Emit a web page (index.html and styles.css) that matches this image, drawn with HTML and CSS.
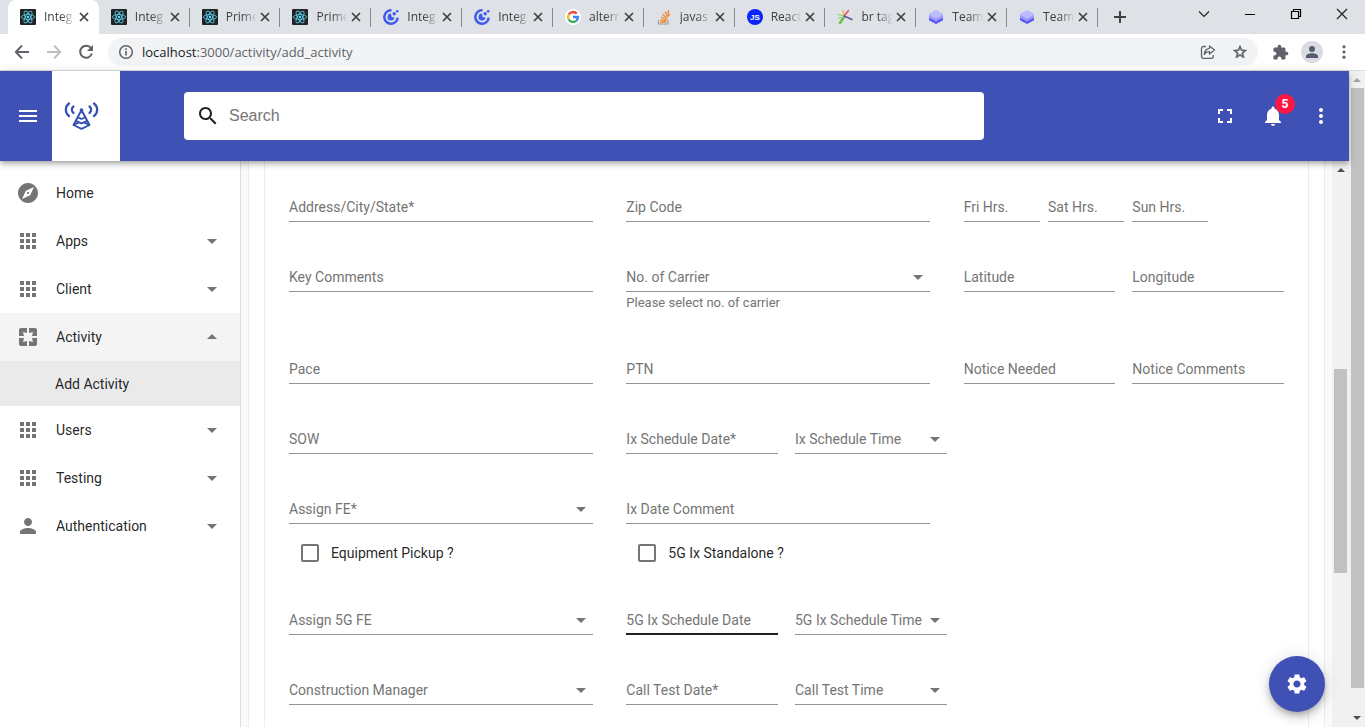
FILE: index.html
```html
<!DOCTYPE html>
<html lang="en">
<head>
<meta charset="utf-8">
<title>Add Activity</title>
<link rel="stylesheet" href="styles.css">
</head>
<body>
<svg class="sprite" aria-hidden="true">
  <symbol id="react" viewBox="0 0 16 16"><rect width="16" height="16" rx="1" fill="#222"/><g fill="none" stroke="#53c1de" stroke-width=".9"><ellipse cx="8" cy="8" rx="6.6" ry="2.5"/><ellipse cx="8" cy="8" rx="6.6" ry="2.5" transform="rotate(60 8 8)"/><ellipse cx="8" cy="8" rx="6.6" ry="2.5" transform="rotate(120 8 8)"/></g><circle cx="8" cy="8" r="1.3" fill="#61dafb"/></symbol>
  <symbol id="clock" viewBox="0 0 16 16"><path d="M8.5 1.3A6.7 6.7 0 1 0 14.7 8.6" fill="none" stroke="#3d5af1" stroke-width="2.5"/><path d="M8 4.6A3.5 3.5 0 1 0 11.5 8.600L8.600 8z" fill="#3d5af1"/><circle cx="11.200" cy="4.700" r="1.700" fill="#3d5af1"/><circle cx="14.200" cy="2.300" r="1.300" fill="#3d5af1"/></symbol>
  <symbol id="google" viewBox="0 0 16 16"><circle cx="8" cy="8" r="8" fill="#fff"/><g fill="none" stroke-width="2.300"><path d="M11.700 4.600A5 5 0 0 0 3.700 5.500" stroke="#ea4335"/><path d="M3.700 5.500A5 5 0 0 0 3.700 10.500" stroke="#fbbc05"/><path d="M3.700 10.500A5 5 0 0 0 11.200 11.800" stroke="#34a853"/><path d="M11.200 11.800A5 5 0 0 0 13 8H8" stroke="#4285f4"/></g></symbol>
  <symbol id="stack" viewBox="0 0 16 16"><path d="M2.500 11v4h9.500v-4" fill="none" stroke="#9a9b9e" stroke-width="1.200"/><g stroke="#f48024" stroke-width="1.300"><path d="M4.200 13h6M4.300 10.600l6 1M5 8l5.800 2.500M6.500 5.200l5 4M9 2.800l3.400 5M12 1l1 6"/></g></symbol>
  <symbol id="js" viewBox="0 0 16 16"><circle cx="8" cy="8" r="8" fill="#0b24fb"/><text x="8" y="10.800" text-anchor="middle" class="js-mark">JS</text></symbol>
  <symbol id="burst" viewBox="0 0 16 16"><g fill="none" stroke-linecap="round"><path d="M7 8L3 14" stroke="#6cc04a" stroke-width="2.500"/><path d="M7 7L.8 5.500M8 8L1.500 9" stroke="#8fd06a" stroke-width="1"/><path d="M7 6.500L6 1.500" stroke="#f5b642" stroke-width="1.300"/><path d="M7.500 6.500l4-5" stroke="#ef4d5e" stroke-width="1.500"/><path d="M7 7l8 3.500" stroke="#6a4f9c" stroke-width="1.500"/></g></symbol>
  <symbol id="layers" viewBox="0 0 16 16"><path d="M1 8.300v3L8 15l7-3.700v-3z" fill="#5a55f5"/><path d="M1 5.800v3L8 12.500l7-3.700v-3z" fill="#9b99ff"/><path d="M8 1l7 3.800v1L8 9.700 1 5.800v-1z" fill="#bdbcff"/></symbol>
  <symbol id="x" viewBox="0 0 12 12"><path d="M2 2l8 8M10 2l-8 8" stroke="#3c4043" stroke-width="1.700"/></symbol>
  <symbol id="down" viewBox="0 0 24 24"><path d="M7 10l5 5 5-5z" fill="currentColor"/></symbol>
  <symbol id="up" viewBox="0 0 24 24"><path d="M7 14l5-5 5 5z" fill="currentColor"/></symbol>
  <symbol id="apps" viewBox="0 0 24 24"><path fill="currentColor" d="M4 8h4V4H4v4zm6 12h4v-4h-4v4zm-6 0h4v-4H4v4zm0-6h4v-4H4v4zm6 0h4v-4h-4v4zm6-10v4h4V4h-4zm-6 4h4V4h-4v4zm6 6h4v-4h-4v4zm0 6h4v-4h-4v4z"/></symbol>
  <symbol id="person" viewBox="0 0 24 24"><path fill="currentColor" d="M12 12c2.210 0 4-1.790 4-4s-1.790-4-4-4-4 1.790-4 4 1.790 4 4 4zm0 2c-2.670 0-8 1.340-8 4v2h16v-2c0-2.660-5.330-4-8-4z"/></symbol>
  <symbol id="more" viewBox="0 0 24 24"><path fill="currentColor" d="M12 8c1.100 0 2-.9 2-2s-.9-2-2-2-2 .9-2 2 .9 2 2 2zm0 2c-1.100 0-2 .9-2 2s.9 2 2 2 2-.9 2-2-.9-2-2-2zm0 6c-1.100 0-2 .9-2 2s.9 2 2 2 2-.9 2-2-.9-2-2-2z"/></symbol>
</svg>

<div class="browser">
  <div class="tabstrip">
    <div class="tabs">
      <div class="tab tab--active"><svg class="favicon"><use href="#react"/></svg><span class="tab-title">Integ</span><button class="tab-close" aria-label="Close tab"><svg><use href="#x"/></svg></button></div>
      <div class="tab"><svg class="favicon"><use href="#react"/></svg><span class="tab-title">Integ</span><button class="tab-close" aria-label="Close tab"><svg><use href="#x"/></svg></button></div>
      <div class="tab"><svg class="favicon"><use href="#react"/></svg><span class="tab-title">Prime</span><button class="tab-close" aria-label="Close tab"><svg><use href="#x"/></svg></button></div>
      <div class="tab"><svg class="favicon"><use href="#react"/></svg><span class="tab-title">Prime</span><button class="tab-close" aria-label="Close tab"><svg><use href="#x"/></svg></button></div>
      <div class="tab"><svg class="favicon"><use href="#clock"/></svg><span class="tab-title">Integ</span><button class="tab-close" aria-label="Close tab"><svg><use href="#x"/></svg></button></div>
      <div class="tab"><svg class="favicon"><use href="#clock"/></svg><span class="tab-title">Integ</span><button class="tab-close" aria-label="Close tab"><svg><use href="#x"/></svg></button></div>
      <div class="tab"><svg class="favicon"><use href="#google"/></svg><span class="tab-title">altern</span><button class="tab-close" aria-label="Close tab"><svg><use href="#x"/></svg></button></div>
      <div class="tab"><svg class="favicon"><use href="#stack"/></svg><span class="tab-title">javas</span><button class="tab-close" aria-label="Close tab"><svg><use href="#x"/></svg></button></div>
      <div class="tab"><svg class="favicon"><use href="#js"/></svg><span class="tab-title">React</span><button class="tab-close" aria-label="Close tab"><svg><use href="#x"/></svg></button></div>
      <div class="tab"><svg class="favicon"><use href="#burst"/></svg><span class="tab-title">br tag</span><button class="tab-close" aria-label="Close tab"><svg><use href="#x"/></svg></button></div>
      <div class="tab"><svg class="favicon"><use href="#layers"/></svg><span class="tab-title">Team</span><button class="tab-close" aria-label="Close tab"><svg><use href="#x"/></svg></button></div>
      <div class="tab"><svg class="favicon"><use href="#layers"/></svg><span class="tab-title">Team</span><button class="tab-close" aria-label="Close tab"><svg><use href="#x"/></svg></button></div>
    </div>
    <button class="new-tab" aria-label="New tab"><svg width="14" height="14" viewBox="0 0 14 14"><path d="M7 1v12M1 7h12" stroke="#3c4043" stroke-width="2"/></svg></button>
    <div class="window-controls">
      <button aria-label="Search tabs"><svg width="12" height="12" viewBox="0 0 12 12"><path d="M1 3.500l5 5 5-5" fill="none" stroke="#222" stroke-width="1.200"/></svg></button>
      <button aria-label="Minimize"><svg width="12" height="12" viewBox="0 0 12 12"><path d="M1 6.500h10" stroke="#000"/></svg></button>
      <button aria-label="Restore"><svg width="12" height="12" viewBox="0 0 12 12"><path d="M1.500 3.500h7v7h-7zM3.500 3V1.500h7v7H9" fill="none" stroke="#000" stroke-width="1.200"/></svg></button>
      <button aria-label="Close window"><svg width="12" height="12" viewBox="0 0 12 12"><path d="M1 1l10 10M11 1L1 11" stroke="#222" stroke-width="1.200"/></svg></button>
    </div>
  </div>
  <div class="toolbar">
    <button class="tool" aria-label="Back"><svg width="16" height="16" viewBox="0 0 16 16"><path d="M15 8H2M8 1.500L1.800 8 8 14.500" fill="none" stroke="#5f6368" stroke-width="1.900"/></svg></button>
    <button class="tool" aria-label="Forward"><svg width="16" height="16" viewBox="0 0 16 16"><path d="M1 8h13M8 1.500L14.200 8 8 14.500" fill="none" stroke="#bcbec0" stroke-width="1.900"/></svg></button>
    <button class="tool" aria-label="Reload"><svg width="16" height="16" viewBox="0 0 16 16"><path d="M13 4.200A6 6 0 1 0 13.900 9.500" fill="none" stroke="#5f6368" stroke-width="2"/><path d="M15 1v6H9z" fill="#5f6368"/></svg></button>
    <div class="omnibox">
      <svg width="16" height="16" viewBox="0 0 16 16"><circle cx="8" cy="8" r="6.300" fill="none" stroke="#5f6368" stroke-width="1.500"/><path d="M7.200 7h1.600v4.500H7.200zM7.200 4.300h1.600v1.600H7.200z" fill="#5f6368"/></svg>
      <span class="url"><span class="host">localhost</span>:3000/activity/add_activity</span>
      <button class="tool" aria-label="Share"><svg width="16" height="16" viewBox="0 0 16 16"><path d="M6 2.500H3.500a2 2 0 0 0-2 2v7.800a2 2 0 0 0 2 2h7.800a2 2 0 0 0 2-2V11" fill="none" stroke="#5f6368" stroke-width="1.300"/><path d="M9.500 2l5 4-5 4V7.700C7 7.700 5.500 8.500 4.300 10.500 4.500 7.200 6.200 4.700 9.500 4.300z" fill="none" stroke="#5f6368" stroke-width="1.300" stroke-linejoin="round"/></svg></button>
      <button class="tool" aria-label="Bookmark"><svg width="16" height="16" viewBox="0 0 24 24"><path fill="#5f6368" d="M22 9.240l-7.190-.62L12 2 9.190 8.630 2 9.240l5.460 4.730L5.820 21 12 17.270 18.180 21l-1.630-7.030L22 9.240zM12 15.400l-3.760 2.270 1-4.280-3.320-2.880 4.380-.38L12 6.100l1.710 4.040 4.380.38-3.320 2.880 1 4.280L12 15.400z" stroke="#5f6368"/></svg></button>
    </div>
    <button class="tool" aria-label="Extensions"><svg width="17" height="17" viewBox="0 0 24 24"><path fill="#5f6368" d="M20.500 11H19V7c0-1.100-.9-2-2-2h-4V3.500C13 2.120 11.880 1 10.500 1S8 2.120 8 3.500V5H4c-1.100 0-1.990.9-1.990 2v3.800H3.500c1.490 0 2.700 1.210 2.700 2.700s-1.210 2.700-2.700 2.700H2V20c0 1.100.9 2 2 2h3.800v-1.500c0-1.490 1.210-2.700 2.700-2.700 1.490 0 2.700 1.210 2.700 2.700V22H17c1.100 0 2-.9 2-2v-4h1.500c1.380 0 2.500-1.120 2.500-2.500S21.880 11 20.500 11z"/></svg></button>
    <button class="tool" aria-label="Profile"><svg class="avatar" width="22" height="22" viewBox="0 0 22 22"><circle cx="11" cy="11" r="11" fill="#dadce0"/><circle cx="11" cy="8" r="3" fill="#525e70"/><path d="M5 17v-1.500c0-2 3-3.200 6-3.200s6 1.200 6 3.200V17z" fill="#525e70"/></svg></button>
    <button class="tool" aria-label="Menu"><svg width="16" height="16" viewBox="0 0 16 16" fill="#5f6368"><circle cx="8" cy="2.800" r="1.600"/><circle cx="8" cy="8" r="1.600"/><circle cx="8" cy="13.200" r="1.600"/></svg></button>
  </div>
</div>

<div class="viewport">
  <div class="app">
    <header class="appbar">
      <button class="icon-btn menu-btn" aria-label="Toggle menu"><svg width="24" height="24" viewBox="0 0 24 24"><path fill="currentColor" d="M3 18h18v-2H3v2zm0-5h18v-2H3v2zm0-7v2h18V6H3z"/></svg></button>
      <a class="logo" href="#" aria-label="Home"><svg width="36" height="30" viewBox="0 0 36 30" fill="none" stroke="#3151b5" stroke-linecap="round" stroke-linejoin="round"><path d="M5 2.500C.8 5.500.8 12 5 15M30 2.500C34.200 5.500 34.200 12 30 15" stroke-width="2.200"/><path d="M9.500 5.500C7.300 7 7.300 10.500 9.500 12M25.500 5.500C27.700 7 27.700 10.500 25.500 12" stroke-width="2.200"/><circle cx="17.500" cy="9" r="1.800" fill="#3151b5" stroke="none"/><path d="M17 10L9.500 24l8 3.800 8-3.800L18 10M14.300 16.500l3.200 1.500 3.200-1.500M12.300 20l5.200 2.400 5.200-2.400M9.500 24l5-2.400M25.500 24l-5-2.400" stroke-width="1.900"/></svg></a>
      <form class="search" role="search">
        <label for="search"><svg width="24" height="24" viewBox="0 0 24 24" role="img" aria-label="Search"><path fill="#212121" d="M15.500 14h-.79l-.28-.27C15.410 12.590 16 11.110 16 9.500 16 5.910 13.090 3 9.500 3S3 5.910 3 9.500 5.910 16 9.500 16c1.610 0 3.090-.59 4.230-1.570l.27.28v.79l5 4.990L20.490 19l-4.990-5zm-6 0C7.010 14 5 11.990 5 9.500S7.010 5 9.500 5 14 7.010 14 9.500 11.990 14 9.500 14z"/></svg></label>
        <input id="search" type="search" placeholder="Search">
      </form>
      <div class="actions">
        <button class="icon-btn" aria-label="Full screen"><svg width="24" height="24" viewBox="0 0 24 24"><path fill="currentColor" d="M7 14H5v5h5v-2H7v-3zm-2-4h2V7h3V5H5v5zm12 7h-3v2h5v-5h-2v3zM14 5v2h3v3h2V5h-5z"/></svg></button>
        <button class="icon-btn" aria-label="Notifications"><svg width="24" height="24" viewBox="0 0 24 24"><path fill="currentColor" d="M12 22c1.100 0 2-.9 2-2h-4c0 1.100.89 2 2 2zm6-6v-5c0-3.070-1.640-5.640-4.500-6.320V4c0-.83-.67-1.500-1.500-1.500s-1.500.67-1.500 1.500v.68C7.630 5.360 6 7.920 6 11v5l-2 2v1h16v-1l-2-2z"/></svg><span class="badge">5</span></button>
        <button class="icon-btn" aria-label="More"><svg width="24" height="24"><use href="#more"/></svg></button>
      </div>
    </header>

    <div class="body">
      <nav class="sidebar">
        <a class="nav-item" href="#"><svg viewBox="0 0 24 24"><path fill="currentColor" d="M12 10.900c-.61 0-1.100.49-1.100 1.100s.49 1.100 1.100 1.100c.61 0 1.100-.49 1.100-1.100s-.49-1.100-1.100-1.100zM12 2C6.480 2 2 6.480 2 12s4.480 10 10 10 10-4.480 10-10S17.520 2 12 2zm2.190 12.190L6 18l3.810-8.190L18 6l-3.810 8.190z"/></svg><span>Home</span></a>
        <a class="nav-item" href="#"><svg><use href="#apps"/></svg><span>Apps</span><svg><use href="#down"/></svg></a>
        <a class="nav-item" href="#"><svg><use href="#apps"/></svg><span>Client</span><svg><use href="#down"/></svg></a>
        <a class="nav-item nav-item--open" href="#"><svg viewBox="0 0 24 24"><path fill="currentColor" d="M3 5v6h5L7 7l4 1V3H5c-1.100 0-2 .9-2 2zm5 8H3v6c0 1.100.9 2 2 2h6v-5l-4 1 1-4zm9 4l-4-1v5h6c1.100 0 2-.9 2-2v-6h-5l1 4zm2-14h-6v5l4-1-1 4h5V5c0-1.100-.9-2-2-2z"/></svg><span>Activity</span><svg><use href="#up"/></svg></a>
        <a class="nav-sub" href="#">Add Activity</a>
        <a class="nav-item" href="#"><svg><use href="#apps"/></svg><span>Users</span><svg><use href="#down"/></svg></a>
        <a class="nav-item" href="#"><svg><use href="#apps"/></svg><span>Testing</span><svg><use href="#down"/></svg></a>
        <a class="nav-item" href="#"><svg><use href="#person"/></svg><span>Authentication</span><svg><use href="#down"/></svg></a>
      </nav>

      <main class="main">
        <div class="card">
          <form class="panel">
            <div class="row">
              <div class="cell span-4"><div class="field"><label for="address">Address/City/State*</label><input id="address"></div></div>
              <div class="cell span-4"><div class="field"><label for="zip">Zip Code</label><input id="zip"></div></div>
              <div class="cell"><div class="field"><label for="fri">Fri Hrs.</label><input id="fri"></div></div>
              <div class="cell"><div class="field"><label for="sat">Sat Hrs.</label><input id="sat"></div></div>
              <div class="cell"><div class="field"><label for="sun">Sun Hrs.</label><input id="sun"></div></div>
            </div>
            <div class="row">
              <div class="cell span-4"><div class="field"><label for="comments">Key Comments</label><input id="comments"></div></div>
              <div class="cell span-4"><div class="field"><label for="carrier">No. of Carrier</label><select id="carrier"><option></option></select><svg><use href="#down"/></svg></div><p class="helper">Please select no. of carrier</p></div>
              <div class="cell span-2"><div class="field"><label for="lat">Latitude</label><input id="lat"></div></div>
              <div class="cell span-2"><div class="field"><label for="lng">Longitude</label><input id="lng"></div></div>
            </div>
            <div class="row">
              <div class="cell span-4"><div class="field"><label for="pace">Pace</label><input id="pace"></div></div>
              <div class="cell span-4"><div class="field"><label for="ptn">PTN</label><input id="ptn"></div></div>
              <div class="cell span-2"><div class="field"><label for="notice">Notice Needed</label><input id="notice"></div></div>
              <div class="cell span-2"><div class="field"><label for="notice-comments">Notice Comments</label><input id="notice-comments"></div></div>
            </div>
            <div class="row">
              <div class="cell span-4"><div class="field"><label for="sow">SOW</label><input id="sow"></div></div>
              <div class="cell span-2"><div class="field"><label for="ix-date">Ix Schedule Date*</label><input id="ix-date"></div></div>
              <div class="cell span-2"><div class="field"><label for="ix-time">Ix Schedule Time</label><select id="ix-time"><option></option></select><svg><use href="#down"/></svg></div></div>
            </div>
            <div class="row">
              <div class="cell span-4"><div class="field"><label for="fe">Assign FE*</label><select id="fe"><option></option></select><svg><use href="#down"/></svg></div><label class="check"><input type="checkbox">Equipment Pickup ?</label></div>
              <div class="cell span-4"><div class="field"><label for="ix-comment">Ix Date Comment</label><input id="ix-comment"></div><label class="check"><input type="checkbox">5G Ix Standalone ?</label></div>
            </div>
            <div class="row">
              <div class="cell span-4"><div class="field"><label for="fe5">Assign 5G FE</label><select id="fe5"><option></option></select><svg><use href="#down"/></svg></div></div>
              <div class="cell span-2"><div class="field field--active"><label for="ix5-date">5G Ix Schedule Date</label><input id="ix5-date"></div></div>
              <div class="cell span-2"><div class="field"><label for="ix5-time">5G Ix Schedule Time</label><select id="ix5-time"><option></option></select><svg><use href="#down"/></svg></div></div>
            </div>
            <div class="row">
              <div class="cell span-4"><div class="field"><label for="manager">Construction Manager</label><select id="manager"><option></option></select><svg><use href="#down"/></svg></div></div>
              <div class="cell span-2"><div class="field"><label for="call-date">Call Test Date*</label><input id="call-date"></div></div>
              <div class="cell span-2"><div class="field"><label for="call-time">Call Test Time</label><select id="call-time"><option></option></select><svg><use href="#down"/></svg></div></div>
            </div>
          </form>
        </div>
      </main>
      <div class="scrollbar scrollbar--inner" aria-hidden="true"><i class="arrow-up"></i><i class="thumb"></i></div>
    </div>
  </div>
  <div class="scrollbar scrollbar--outer" aria-hidden="true"><i class="arrow-up"></i><i class="thumb"></i><i class="arrow-down"></i></div>
  <button class="fab" aria-label="Settings"><svg width="24" height="24" viewBox="0 0 24 24"><path fill="currentColor" d="M19.140 12.940c.04-.3.060-.61.060-.94 0-.32-.02-.64-.07-.94l2.030-1.580c.18-.14.230-.41.120-.61l-1.920-3.320c-.12-.22-.37-.29-.59-.22l-2.390.96c-.5-.38-1.030-.7-1.620-.94l-.36-2.540c-.04-.24-.24-.41-.48-.41h-3.840c-.24 0-.43.17-.47.41l-.36 2.540c-.59.24-1.130.57-1.620.94l-2.390-.96c-.22-.08-.47 0-.59.22L2.740 8.870c-.12.21-.08.47.12.61l2.030 1.580c-.05.3-.09.63-.09.94s.02.64.07.94l-2.030 1.580c-.18.14-.23.41-.12.61l1.920 3.320c.12.22.37.29.59.22l2.390-.96c.5.38 1.030.7 1.620.94l.36 2.540c.05.24.24.41.48.41h3.840c.24 0 .44-.17.47-.41l.36-2.540c.59-.24 1.130-.56 1.620-.94l2.390.96c.22.08.47 0 .59-.22l1.920-3.320c.12-.22.070-.47-.12-.61l-2.010-1.580zM12 15.600c-1.980 0-3.600-1.620-3.600-3.600s1.620-3.600 3.600-3.600 3.600 1.620 3.600 3.600-1.620 3.600-3.600 3.600z"/></svg></button>
</div>
</body>
</html>
```

FILE: styles.css
```css
* { box-sizing: border-box; }
body {
  margin: 0;
  height: 100vh;
  display: flex;
  flex-direction: column;
  overflow: hidden;
  background: #fafafa;
  color: rgba(0, 0, 0, 0.87);
  font: 14px/20px Roboto, sans-serif;
}
button { padding: 0; border: 0; background: none; color: inherit; font: inherit; }
a { color: inherit; text-decoration: none; }
svg { display: block; flex: none; }
.sprite { position: absolute; width: 0; height: 0; }
.js-mark { font: bold 8px "Liberation Sans", sans-serif; fill: #fff; }

/* Browser frame */
.browser { flex: none; font-family: "Open Sans", sans-serif; border-bottom: 1px solid #dadce0; background: #fff; }
.tabstrip { display: flex; height: 34px; padding-left: 8px; background: #dee1e6; }
.tabs { display: flex; flex: 0 1 1090px; min-width: 0; }
.tab { display: flex; flex: 1 1 0; min-width: 0; align-items: center; padding: 0 9px 0 12px; position: relative; }
.tab::after { content: ""; position: absolute; right: 0; top: 8px; height: 19px; width: 1px; background: #85888d; }
.tab--active { background: #fff; border-radius: 8px 8px 0 0; }
.tab--active::after { display: none; }
.favicon { width: 16px; height: 16px; }
.tab-title {
  flex: 1;
  min-width: 0;
  margin-left: 8px;
  white-space: nowrap;
  font-size: 12px;
  line-height: 16px;
  color: #3c4043;
  mask-image: linear-gradient(to right, #000 50%, transparent 96%);
}
.tab-close { margin-left: 1px; }
.tab-close svg { width: 12px; height: 12px; }
.new-tab { width: 44px; display: grid; place-items: center; }
.window-controls { display: flex; margin-left: auto; height: 28px; }
.window-controls button { width: 46px; display: grid; place-items: center; }
.toolbar { display: flex; align-items: center; height: 36px; padding: 0 5px 0 6px; }
.tool { width: 32px; height: 32px; display: grid; place-items: center; flex: none; }
.omnibox {
  display: flex;
  flex: 1;
  min-width: 0;
  align-items: center;
  height: 28px;
  margin: 0 6px;
  padding: 0 2px 0 10px;
  border-radius: 14px;
  background: #f1f3f4;
}
.url { flex: 1; margin-left: 8px; font-size: 13px; color: #5f6368; }
.host { color: #202124; }

/* Page */
.viewport { display: flex; flex: 1; min-height: 0; position: relative; }
.app { display: flex; flex-direction: column; flex: 1; min-width: 0; }
.appbar {
  display: flex;
  flex: none;
  align-items: center;
  height: 90px;
  background: #3f51b5;
  color: #fff;
  position: relative;
  z-index: 1;
  box-shadow: 0 2px 4px -1px rgba(0, 0, 0, .2), 0 4px 5px rgba(0, 0, 0, .14), 0 1px 10px rgba(0, 0, 0, .12);
}
.icon-btn { width: 48px; height: 48px; display: grid; place-items: center; position: relative; flex: none; }
.menu-btn { width: 52px; padding-left: 4px; }
.logo { width: 68px; align-self: stretch; display: grid; align-items: center; padding-left: 12px; background: #fff; }
.search {
  display: flex;
  align-items: center;
  flex: 0 1 800px;
  height: 48px;
  margin: 0 16px 0 64px;
  padding-left: 12px;
  border-radius: 4px;
  background: #fff;
}
.search input {
  flex: 1;
  min-width: 0;
  height: 100%;
  margin-left: 8px;
  padding: 0 1px;
  border: 0;
  outline: 0;
  background: none;
  font: 16px "Liberation Sans", Arial, sans-serif;
}
.search input::placeholder { color: #757575; }
.actions { display: flex; margin-left: auto; padding-right: 4px; }
.badge {
  position: absolute;
  left: 26px;
  top: 2px;
  width: 20px;
  height: 20px;
  border-radius: 50%;
  background: #ff1744;
  font: bold 12px/20px Roboto, sans-serif;
  text-align: center;
}
.body { display: flex; flex: 1; min-height: 0; }

.sidebar { flex: 0 0 241px; padding-top: 8px; border-right: 1px solid #dedede; background: #fff; overflow: hidden; }
.nav-item { display: flex; align-items: center; height: 48px; padding: 0 16px; }
.nav-item svg { width: 24px; height: 24px; color: #757575; }
.nav-item span { flex: 1; margin-left: 16px; }
.nav-item--open { background: #f4f4f4; }
.nav-sub { display: flex; align-items: center; height: 45px; padding-left: 55px; background: #eaeaea; }

.main { flex: 1; min-width: 0; padding: 0 7px; overflow: hidden; }
.card { height: 100%; padding: 0 15px; border: solid #ececec; border-width: 0 1px; background: #fff; }
.panel { height: 100%; padding: 32px 7px 0 24px; border: solid #ececec; border-width: 0 1px; }
.row { display: grid; grid-template-columns: repeat(12, minmax(0, 1fr)); margin-bottom: 41px; }
.span-2 { grid-column: span 2; }
.span-4 { grid-column: span 4; }
.field { display: grid; width: 90%; height: 29px; color: #757575; border-bottom: 1px solid #949494; }
.field > * { grid-area: 1 / 1; }
.field label { align-self: center; white-space: nowrap; pointer-events: none; }
.field input, .field select {
  width: 100%;
  min-width: 0;
  height: 100%;
  padding: 0;
  border: 0;
  outline: 0;
  appearance: none;
  background: none;
  font: inherit;
}
.field svg { width: 24px; height: 24px; place-self: center end; pointer-events: none; }
.field--active { border-bottom: 2px solid #212121; }
.helper { margin: 0; font-size: 13px; line-height: 22px; color: #757575; }
.check { display: flex; align-items: center; height: 25px; margin: 16px 0 0 12px; }
.check input {
  appearance: none;
  width: 18px;
  height: 18px;
  margin: 0 12px 0 0;
  border: 2px solid #757575;
  border-radius: 2px;
}

.scrollbar { display: flex; flex-direction: column; align-items: center; flex: none; background: #f1f1f1; }
.scrollbar--inner { width: 17px; }
.scrollbar--outer { width: 16px; }
.thumb { width: 13px; background: #c1c1c1; }
.scrollbar--inner .thumb { height: 36%; margin-top: 197px; }
.scrollbar--outer .thumb { flex: 1; margin: 6px 0 28px; }
.arrow-up, .arrow-down { width: 0; height: 0; border: 4px solid transparent; }
.arrow-up { margin-top: 3px; border-bottom-color: #505050; }
.scrollbar--outer .arrow-up { border-bottom-color: #a3a3a3; }
.arrow-down { margin-bottom: 3px; border-top-color: #505050; }

.fab {
  position: absolute;
  right: 40px;
  bottom: 15px;
  z-index: 2;
  width: 56px;
  height: 56px;
  display: grid;
  place-items: center;
  border-radius: 50%;
  background: #3f51b5;
  color: #fff;
  box-shadow: 0 3px 5px -1px rgba(0, 0, 0, .2), 0 6px 10px rgba(0, 0, 0, .14), 0 1px 18px rgba(0, 0, 0, .12);
}
```
